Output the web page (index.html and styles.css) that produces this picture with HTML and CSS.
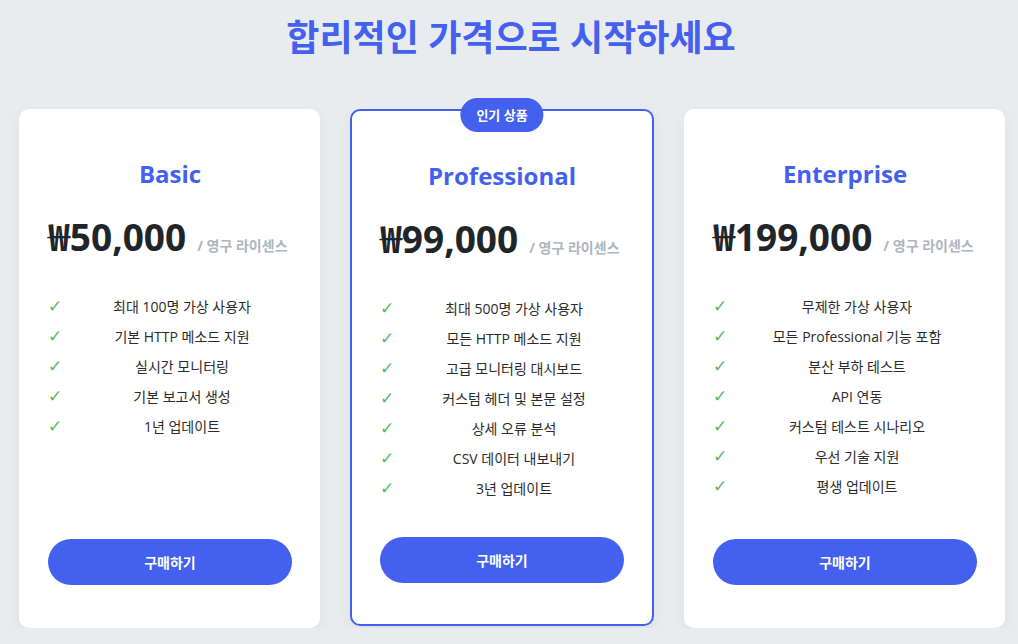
FILE: index.html
```html
<!DOCTYPE html>
<html lang="ko">
<head>
    <meta charset="UTF-8">
    <meta name="viewport" content="width=device-width, initial-scale=1.0">
    <title>가격 안내</title>
    <link rel="stylesheet" href="styles.css">
</head>
<body>
    <h1 class="page-title">합리적인 가격으로 시작하세요</h1>

    <div class="pricing">
        <div class="plan">
            <h3 class="plan-name">Basic</h3>
            <div class="price">₩50,000<span class="period">/ 영구 라이센스</span></div>
            <ul class="features">
                <li><span class="check">✓</span><span>최대 100명 가상 사용자</span></li>
                <li><span class="check">✓</span><span>기본 HTTP 메소드 지원</span></li>
                <li><span class="check">✓</span><span>실시간 모니터링</span></li>
                <li><span class="check">✓</span><span>기본 보고서 생성</span></li>
                <li><span class="check">✓</span><span>1년 업데이트</span></li>
            </ul>
            <button class="btn">구매하기</button>
        </div>

        <div class="plan popular">
            <div class="badge">인기 상품</div>
            <h3 class="plan-name">Professional</h3>
            <div class="price">₩99,000<span class="period">/ 영구 라이센스</span></div>
            <ul class="features">
                <li><span class="check">✓</span><span>최대 500명 가상 사용자</span></li>
                <li><span class="check">✓</span><span>모든 HTTP 메소드 지원</span></li>
                <li><span class="check">✓</span><span>고급 모니터링 대시보드</span></li>
                <li><span class="check">✓</span><span>커스텀 헤더 및 본문 설정</span></li>
                <li><span class="check">✓</span><span>상세 오류 분석</span></li>
                <li><span class="check">✓</span><span>CSV 데이터 내보내기</span></li>
                <li><span class="check">✓</span><span>3년 업데이트</span></li>
            </ul>
            <button class="btn">구매하기</button>
        </div>

        <div class="plan">
            <h3 class="plan-name">Enterprise</h3>
            <div class="price">₩199,000<span class="period">/ 영구 라이센스</span></div>
            <ul class="features">
                <li><span class="check">✓</span><span>무제한 가상 사용자</span></li>
                <li><span class="check">✓</span><span>모든 Professional 기능 포함</span></li>
                <li><span class="check">✓</span><span>분산 부하 테스트</span></li>
                <li><span class="check">✓</span><span>API 연동</span></li>
                <li><span class="check">✓</span><span>커스텀 테스트 시나리오</span></li>
                <li><span class="check">✓</span><span>우선 기술 지원</span></li>
                <li><span class="check">✓</span><span>평생 업데이트</span></li>
            </ul>
            <button class="btn">구매하기</button>
        </div>
    </div>
</body>
</html>
```

FILE: styles.css
```css
body {
    margin: 0;
    background: #e9ecef;
    font-family: "Open Sans", "Noto Sans CJK KR", sans-serif;
    color: #333;
}

.page-title {
    margin: 17px 0 0;
    padding-left: 4px;
    font-size: 36px;
    line-height: 41px;
    font-weight: 700;
    color: #4361ee;
    text-align: center;
}

.pricing {
    display: grid;
    grid-template-columns: 301px 304px 321px;
    grid-auto-rows: 519px;
    gap: 30px;
    margin: 51px 0 0 19px;
}

.plan {
    position: relative;
    display: flex;
    flex-direction: column;
    box-sizing: border-box;
    background: #fff;
    border-radius: 10px;
    padding: 48px 28px 43px 29px;
    box-shadow: 0 5px 15px rgba(0, 0, 0, 0.05);
}

.plan.popular {
    border: 2px solid #4361ee;
    padding: 48px 28px 41px 28px;
    margin-bottom: 2px;
}

.badge {
    position: absolute;
    top: -13px;
    left: 50%;
    transform: translateX(-50%);
    background: #4361ee;
    color: #fff;
    font-size: 13px;
    font-weight: 700;
    line-height: 34px;
    padding: 0 16px;
    border-radius: 17px;
    white-space: nowrap;
}

.plan-name {
    margin: 0;
    font-size: 24px;
    line-height: 34px;
    font-weight: 700;
    color: #4361ee;
    text-align: center;
}

.price {
    margin-top: 19px;
    font-size: 37px;
    line-height: 54px;
    font-weight: 700;
    color: #212529;
    white-space: nowrap;
}

.period {
    margin-left: 11px;
    font-size: 14px;
    font-weight: 700;
    color: #adb5bd;
}

.features {
    list-style: none;
    margin: 19px 0 0;
    padding: 0;
}

.features li {
    display: flex;
    align-items: center;
    font-size: 14px;
    line-height: 30px;
    color: #2b2b2b;
}

.features li span:last-child {
    flex: 1;
    text-align: center;
}

.check {
    width: 24px;
    color: #5cb85c;
    font-size: 17px;
    font-family: "Liberation Sans", "DejaVu Sans", sans-serif;
}

.btn {
    margin-top: auto;
    height: 46px;
    border: none;
    border-radius: 23px;
    background: #4361ee;
    color: #fff;
    font-family: inherit;
    font-size: 14px;
    font-weight: 700;
    cursor: pointer;
}
```
